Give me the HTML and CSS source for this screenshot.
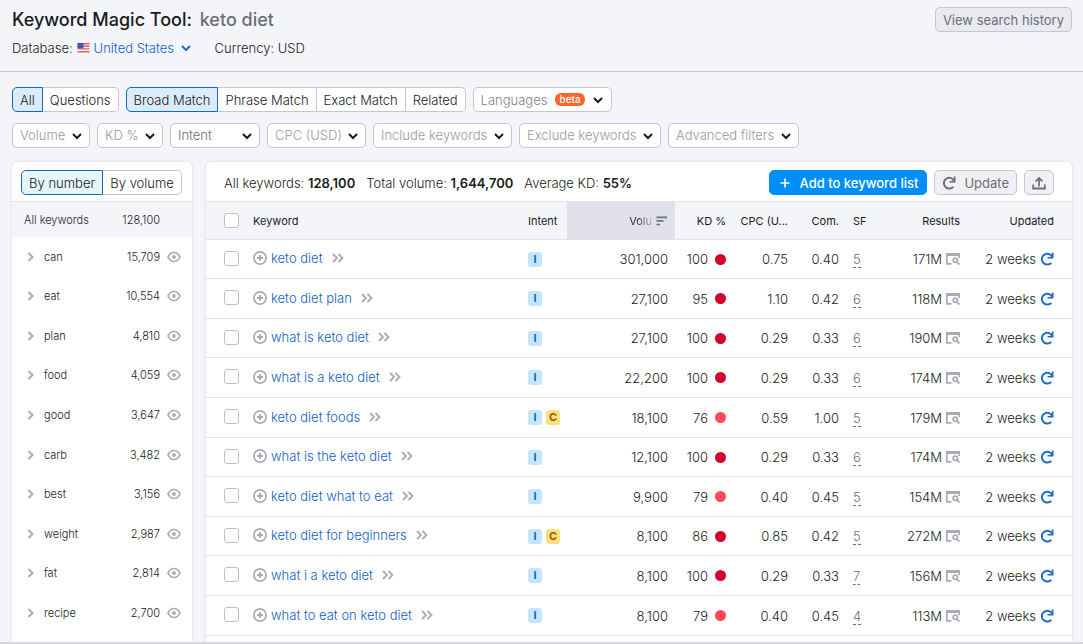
FILE: index.html
```html
<!DOCTYPE html>
<html lang="en">
<head>
<meta charset="utf-8">
<meta name="viewport" content="width=device-width, initial-scale=1">
<title>Keyword Magic Tool: keto diet</title>
<link rel="stylesheet" href="styles.css">
</head>
<body>
<svg class="sprite" aria-hidden="true">
  <symbol id="i-down" viewBox="0 0 10 10"><path d="M1 3l4 4 4-4" fill="none" stroke="currentColor" stroke-width="2"/></symbol>
  <symbol id="i-right" viewBox="0 0 8 10"><path d="M1.500 1l4 4-4 4" fill="none" stroke="currentColor" stroke-width="2"/></symbol>
  <symbol id="i-more" viewBox="0 0 12 10"><path d="M1 1l4 4-4 4M6.500 1l4 4-4 4" fill="none" stroke="currentColor" stroke-width="1.800"/></symbol>
  <symbol id="i-eye" viewBox="0 0 14 12"><path d="M1 6c1.400-3 3.600-4.500 6-4.500S11.600 3 13 6c-1.400 3-3.600 4.500-6 4.500S2.400 9 1 6z" fill="none" stroke="currentColor" stroke-width="1.700" stroke-linejoin="round"/><circle cx="7" cy="6" r="1.900" fill="currentColor"/></symbol>
  <symbol id="i-add" viewBox="0 0 14 14"><circle cx="7" cy="7" r="6.100" fill="none" stroke="currentColor" stroke-width="1.700"/><path d="M7 4v6M4 7h6" stroke="currentColor" stroke-width="1.800"/></symbol>
  <symbol id="i-plus" viewBox="0 0 10 10"><path d="M5 .5v9M.5 5h9" stroke="currentColor" stroke-width="1.600"/></symbol>
  <symbol id="i-refresh" viewBox="0 0 14 14"><path d="M11.300 10.800A5.400 5.400 0 1 1 10.800 3.100L12 4.600" fill="none" stroke="currentColor" stroke-width="2"/><path d="M13.500 .6v6H7.500V4.900h4.300V.6z" fill="currentColor"/></symbol>
  <symbol id="i-export" viewBox="0 0 14 14"><path d="M1.200 8.500v4h11.600v-4M7 10.500V2.500M3.600 5.300L7 1.900l3.400 3.400" fill="none" stroke="currentColor" stroke-width="1.800"/></symbol>
  <symbol id="i-serp" viewBox="0 0 14 12"><path d="M0 0h14v5h-1.700V3H1.700v7H5.500v1.700H0z" fill="currentColor"/><circle cx="9.300" cy="7.300" r="2.200" fill="none" stroke="currentColor" stroke-width="1.700"/><path d="M10.700 8.800l2.700 2.700" stroke="currentColor" stroke-width="1.900"/></symbol>
  <symbol id="i-sort" viewBox="0 0 12 10"><path d="M.5 1.300h10.500M.5 4.900h7M.5 8.500h3.500" stroke="currentColor" stroke-width="1.700"/></symbol>
</svg>

<div class="app">
  <header class="top">
    <div class="top-main">
      <h1 class="title">Keyword Magic Tool: <span class="query">keto diet</span></h1>
      <div class="meta">
        <label class="database" for="db">Database:
          <svg class="flag" viewBox="0 0 12 10" aria-hidden="true"><path fill="#fff" d="M0 0h12v10H0z"/><path d="M0 .7h12M0 3.300h12M0 5.900h12M0 8.700h12" stroke="#dc5a60" stroke-width="1.400"/><path fill="#3d4a9c" d="M0 0h6v5.400H0z"/><path d="M.8 1.400h5M.8 2.900h5M.8 4.300h5" stroke="#a9aede" stroke-width=".5" stroke-dasharray=".6 .8"/></svg>
        </label>
        <span class="pick pick-link"><select id="db"><option>United States</option></select><svg class="caret"><use href="#i-down"/></svg></span>
        <span class="currency">Currency: USD</span>
      </div>
    </div>
    <button class="btn btn-history" type="button">View search history</button>
  </header>

  <main class="content">
    <div class="toolbar">
      <div class="segments">
        <button type="button" class="seg" aria-pressed="true">All</button><button type="button" class="seg" aria-pressed="false">Questions</button>
      </div>
      <div class="segments">
        <button type="button" class="seg" aria-pressed="true">Broad Match</button><button type="button" class="seg" aria-pressed="false">Phrase Match</button><button type="button" class="seg" aria-pressed="false">Exact Match</button><button type="button" class="seg" aria-pressed="false">Related</button>
      </div>
      <button type="button" class="languages" aria-haspopup="listbox">Languages <span class="beta">beta</span><svg class="caret"><use href="#i-down"/></svg></button>
    </div>
    <div class="toolbar filters">
      <span class="pick"><select aria-label="Volume"><option>Volume</option></select><svg class="caret"><use href="#i-down"/></svg></span>
      <span class="pick"><select aria-label="KD %"><option>KD %</option></select><svg class="caret"><use href="#i-down"/></svg></span>
      <span class="pick pick-intent"><select aria-label="Intent"><option>Intent</option></select><svg class="caret"><use href="#i-down"/></svg></span>
      <span class="pick"><select aria-label="CPC (USD)"><option>CPC (USD)</option></select><svg class="caret"><use href="#i-down"/></svg></span>
      <span class="pick"><select aria-label="Include keywords"><option>Include keywords</option></select><svg class="caret"><use href="#i-down"/></svg></span>
      <span class="pick"><select aria-label="Exclude keywords"><option>Exclude keywords</option></select><svg class="caret"><use href="#i-down"/></svg></span>
      <span class="pick"><select aria-label="Advanced filters"><option>Advanced filters</option></select><svg class="caret"><use href="#i-down"/></svg></span>
    </div>

    <div class="panels">
      <aside class="card groups">
        <div class="groups-head">
          <div class="segments segments-fill">
            <button type="button" class="seg" aria-pressed="true">By number</button><button type="button" class="seg" aria-pressed="false">By volume</button>
          </div>
        </div>
        <div class="groups-all"><span>All keywords</span><span class="count">128,100</span></div>
        <ul class="group-list" id="groups"></ul>
      </aside>

      <section class="card results">
        <div class="results-head">
          <p class="stat">All keywords: <b>128,100</b></p>
          <p class="stat">Total volume: <b>1,644,700</b></p>
          <p class="stat">Average KD: <b>55%</b></p>
          <div class="actions">
            <button type="button" class="btn btn-primary"><svg class="ic-plus"><use href="#i-plus"/></svg>Add to keyword list</button>
            <button type="button" class="btn btn-update"><svg class="ic-14"><use href="#i-refresh"/></svg>Update</button>
            <button type="button" class="btn btn-export" aria-label="Export"><svg class="ic-14"><use href="#i-export"/></svg></button>
          </div>
        </div>
        <table class="grid">
          <thead>
            <tr>
              <th class="c-check"><input type="checkbox" class="box" aria-label="Select all"></th>
              <th class="c-keyword">Keyword</th>
              <th class="c-intent">Intent</th>
              <th class="c-volume"><span class="sorted"><span class="fade">Volu</span><svg class="ic-sort"><use href="#i-sort"/></svg></span></th>
              <th class="c-kd">KD %</th>
              <th class="c-cpc">CPC (U...</th>
              <th class="c-com">Com.</th>
              <th class="c-sf">SF</th>
              <th class="c-results">Results</th>
              <th class="c-updated">Updated</th>
            </tr>
          </thead>
          <tbody id="rows"></tbody>
        </table>
      </section>
    </div>
  </main>
</div>
<script src="app.js"></script>
</body>
</html>
```

FILE: styles.css
```css
* { box-sizing: border-box; }

body {
  margin: 0;
  background: #f4f5f9;
  color: #191b23;
  font: 300 13px/18px Inter, "Liberation Sans", sans-serif;
}

button, select, input { font: inherit; color: inherit; margin: 0; }
button { white-space: nowrap; }
svg { display: block; flex: none; }
.sprite { position: absolute; width: 0; height: 0; }

.app {
  height: 100vh;
  display: flex;
  flex-direction: column;
  overflow: hidden;
  border-bottom: 2px solid #d5d7dc;
}

/* Page header */
.top {
  display: flex;
  justify-content: space-between;
  align-items: flex-start;
  padding: 7px 11px 14px 12px;
  border-bottom: 1px solid #c4c7cf;
}
.title {
  margin: 0 0 6px;
  color: #191b23;
  font-size: 18px;
  line-height: 26px;
  font-weight: 500;
}
.query { margin-left: 3px; color: #6c6e79; }
.meta { display: flex; align-items: center; }
.database { display: flex; align-items: center; gap: 4px; margin-right: 4px; }
.flag { width: 13px; height: 10px; }
.currency { margin-left: 24px; }

/* Buttons */
.btn {
  display: flex;
  align-items: center;
  height: 25px;
  padding: 0 7px;
  border: 1px solid #c4c7cf;
  border-radius: 5px;
  background: #f0f0f4;
  color: #6c6e79;
  font-weight: 400;
}
.btn-history { background: #e9eaf0; }
.btn-primary { gap: 10px; padding: 0 8px 0 10px; border-color: #008ff8; background: #008ff8; color: #fff; font-weight: 500; }
.btn-update { gap: 8px; }
.ic-plus { width: 10px; height: 10px; }
.ic-14 { width: 14px; height: 14px; }

/* Toolbars */
.content { flex: 1; min-height: 0; padding: 15px 11px 0 12px; }
.toolbar { display: flex; gap: 7px; }
.filters { margin: 11px 0 14px; }

.segments { display: flex; }
.seg {
  height: 25px;
  padding: 0 7px;
  border: 1px solid #c4c7cf;
  background: #fff;
}
.seg + .seg { border-left: 0; }
.seg:first-child { border-radius: 5px 0 0 5px; }
.seg:last-child { border-radius: 0 5px 5px 0; }
.seg[aria-pressed="true"] { border-color: #1769b0; background: #dcebf9; }
.segments-fill { flex: 1; }
.segments-fill .seg { flex: 1 1 auto; }
.segments-fill .seg[aria-pressed="true"] { background: #e5f4fd; }

.languages {
  display: flex;
  align-items: center;
  gap: 8px;
  height: 25px;
  padding: 0 8px 0 7px;
  border: 1px solid #c4c7cf;
  border-radius: 5px;
  background: #fff;
  color: #7d818e;
}
.beta {
  padding: 0 4px;
  border-radius: 6px;
  background: #ff642d;
  color: #fff;
  font-size: 10px;
  line-height: 13px;
  font-weight: 500;
}
.caret { width: 10px; height: 10px; color: #191b23; }

.pick { position: relative; display: flex; }
.pick select {
  appearance: none;
  width: 100%;
  height: 25px;
  padding: 0 23px 1px 7px;
  border: 1px solid #c4c7cf;
  border-radius: 5px;
  background: #fff;
  color: #979aa6;
}
.pick .caret { position: absolute; right: 8px; top: 8px; pointer-events: none; }
.pick-intent { width: 90px; }
.pick-intent select { color: #6c6e79; }
.pick-link select { height: 18px; padding: 0 16px 0 0; border: 0; background: none; color: #1260c4; }
.pick-link .caret { right: 0; top: 4px; color: #1d6cc9; }

/* Panels */
.panels { display: flex; gap: 14px; align-items: flex-start; }
.card {
  border-radius: 5px 5px 0 0;
  background: #fff;
  box-shadow: 0 0 2px #c4c7cf;
}
.groups { flex: none; width: 180px; font-size: 11px; padding-bottom: 40px; }
.groups-head { display: flex; padding: 8px 10px 6px 9px; border-bottom: 1px solid #e0e1e9; font-size: 13px; }
.groups-all {
  display: flex;
  justify-content: space-between;
  align-items: center;
  height: 35px;
  padding: 0 32px 0 12px;
  background: #f4f5f9;
}
.group-list { margin: 0; padding: 0; list-style: none; }
.group {
  display: flex;
  align-items: center;
  height: 40px;
  padding: 0 11px 0 15px;
}
/* Rows alternate between 40px and 39px, two short rows in every five */
.group:nth-child(5n + 1), .group:nth-child(5n + 3) { height: 39px; }
.ic-right { width: 8px; height: 10px; margin-right: 9px; color: #a9abb6; }
.group .count { margin: 0 7px 0 auto; }
.ic-eye { width: 14px; height: 12px; color: #a9abb6; }

/* Results */
.results { flex: 1; min-width: 0; padding-bottom: 40px; }
.results-head { display: flex; align-items: center; gap: 11px; padding: 8px 18px 6px; }
.stat { margin: 0; white-space: nowrap; }
.stat b { font-weight: 600; }
.actions { display: flex; gap: 7px; margin-left: auto; }

.grid { width: 100%; table-layout: fixed; border-collapse: collapse; }
.grid th, .grid td {
  height: 40px;
  padding: 0 7px;
  border-bottom: 1px solid #e0e1e9;
  text-align: right;
  white-space: nowrap;
}
.grid th {
  height: 38px;
  border-top: 1px solid #e0e1e9;
  background: #f4f5f9;
  font-size: 11px;
  font-weight: 400;
}
.grid tbody tr:nth-child(5n + 1) td, .grid tbody tr:nth-child(5n + 3) td { height: 39px; }
.grid .c-check { width: 40px; padding: 0 0 0 18px; }
.grid .c-keyword { text-align: left; }
.grid td.c-check, .grid td.c-keyword { padding-bottom: 2px; }
.grid .c-intent { width: 46px; text-align: left; }
.c-volume { width: 108px; }
.grid th.c-volume { background: #e0e1e9; }
.c-kd { width: 58px; }
.c-cpc { width: 62px; }
.c-com { width: 51px; }
.grid .c-sf { width: 42px; text-align: left; }
.c-results { width: 79px; }
.grid .c-updated { width: 105px; padding-right: 18px; }

.box {
  display: block;
  appearance: none;
  width: 15px;
  height: 15px;
  border: 1px solid #bcbfca;
  border-radius: 3px;
  background: #fff;
}
.line { display: flex; align-items: center; gap: 4px; }
.line-end { justify-content: flex-end; }
.kw { color: #1260c4; text-decoration: none; }
.ic-more { width: 12px; height: 10px; margin-left: 5px; color: #a9abb6; }
.muted { color: #a9abb6; }
.badge {
  width: 14px;
  height: 15px;
  border-radius: 3px;
  font-size: 11px;
  line-height: 15px;
  font-weight: 700;
  text-align: center;
}
.badge-i { background: #c4e5fe; color: #1769b0; }
.badge-c { background: #fcdf80; color: #a05a00; }
.sorted { display: flex; justify-content: flex-end; align-items: center; gap: 4px; }
.fade { background: linear-gradient(90deg, #2b2e38 40%, #b5b7c2); background-clip: text; color: transparent; }
.ic-sort { width: 12px; height: 10px; color: #6c7380; }
.dot { width: 11px; height: 11px; margin-left: 3px; border-radius: 50%; }
.dot-hard { background: #d1002f; }
.dot-mid { background: #ff4953; }
.sf { color: #6c6e79; border-bottom: 1px dashed #6c6e79; }
.ic-serp { width: 14px; height: 12px; color: #a9abb6; }
.fresh { color: #1d6cc9; }
```

FILE: app.js
```js
const groups = [
  ["can", "15,709"], ["eat", "10,554"], ["plan", "4,810"], ["food", "4,059"], ["good", "3,647"],
  ["carb", "3,482"], ["best", "3,156"], ["weight", "2,987"], ["fat", "2,814"], ["recipe", "2,700"]
];

const rows = [
  ["keto diet", "I", "301,000", 100, "0.75", "0.40", 5, "171M"],
  ["keto diet plan", "I", "27,100", 95, "1.10", "0.42", 6, "118M"],
  ["what is keto diet", "I", "27,100", 100, "0.29", "0.33", 6, "190M"],
  ["what is a keto diet", "I", "22,200", 100, "0.29", "0.33", 6, "174M"],
  ["keto diet foods", "IC", "18,100", 76, "0.59", "1.00", 5, "179M"],
  ["what is the keto diet", "I", "12,100", 100, "0.29", "0.33", 6, "174M"],
  ["keto diet what to eat", "I", "9,900", 79, "0.40", "0.45", 5, "154M"],
  ["keto diet for beginners", "IC", "8,100", 86, "0.85", "0.42", 5, "272M"],
  ["what i a keto diet", "I", "8,100", 100, "0.29", "0.33", 7, "156M"],
  ["what to eat on keto diet", "I", "8,100", 79, "0.40", "0.45", 4, "113M"]
];

const icon = (name, cls) => `<svg class="${cls}" aria-hidden="true"><use href="#i-${name}"/></svg>`;

document.getElementById("groups").innerHTML = groups.map(([name, count]) =>
  `<li class="group">${icon("right", "ic-right")}<span>${name}</span><span class="count">${count}</span>${icon("eye", "ic-eye")}</li>`
).join("");

document.getElementById("rows").innerHTML = rows.map(([kw, intent, volume, kd, cpc, com, sf, results]) => `
  <tr>
    <td class="c-check"><input type="checkbox" class="box" aria-label="Select ${kw}"></td>
    <td class="c-keyword"><div class="line">${icon("add", "ic-14 muted")}<a class="kw" href="#">${kw}</a>${icon("more", "ic-more")}</div></td>
    <td class="c-intent"><div class="line">${[...intent].map(i => `<span class="badge badge-${i.toLowerCase()}">${i}</span>`).join("")}</div></td>
    <td>${volume}</td>
    <td><div class="line line-end">${kd}<span class="dot ${kd > 84 ? "dot-hard" : "dot-mid"}"></span></div></td>
    <td>${cpc}</td>
    <td>${com}</td>
    <td class="c-sf"><span class="sf">${sf}</span></td>
    <td><div class="line line-end">${results}${icon("serp", "ic-serp")}</div></td>
    <td class="c-updated"><div class="line line-end">2 weeks${icon("refresh", "ic-14 fresh")}</div></td>
  </tr>`).join("");
```
